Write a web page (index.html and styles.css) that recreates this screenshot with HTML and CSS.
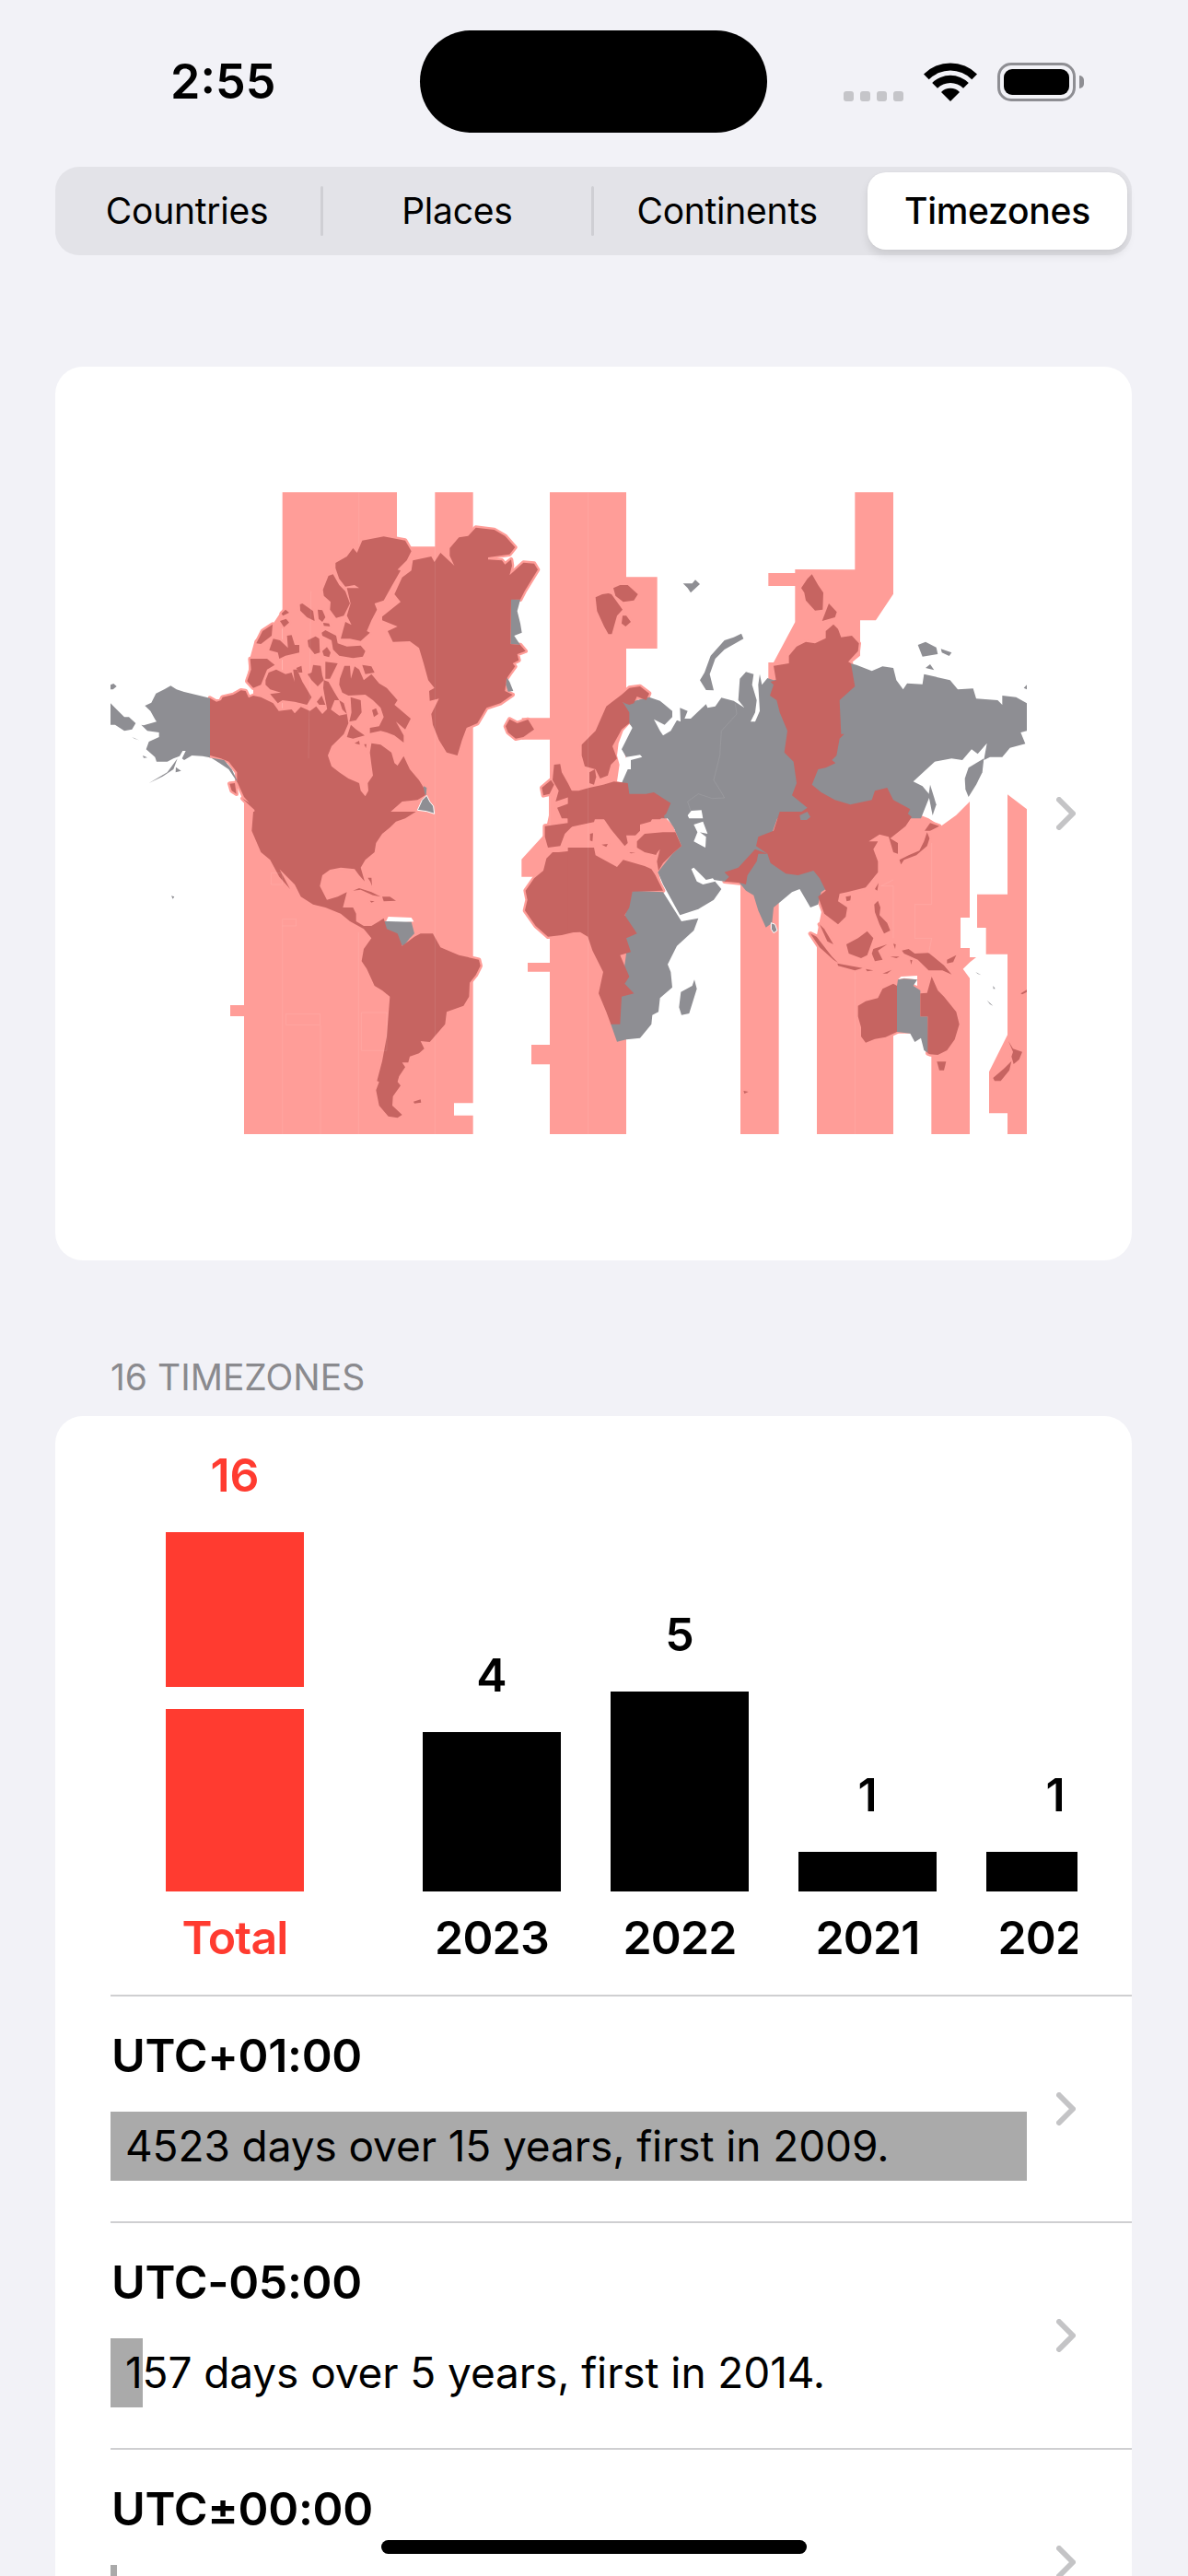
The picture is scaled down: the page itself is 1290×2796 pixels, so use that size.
FILE: index.html
```html
<!DOCTYPE html>
<html lang="en">
<head>
<meta charset="utf-8">
<title>Timezones</title>
<link rel="stylesheet" href="styles.css">
</head>
<body>
<div class="screen">
  <header class="status">
    <div class="time">2:55</div>
    <div class="island"></div>
    <div class="status-icons">
      <div class="signal"><i></i><i></i><i></i><i></i></div>
      <svg class="wifi" viewBox="0 0 58 42"><path d="M0 12.5A41 41 0 0 1 58 12.5L52.3 18.2A33 33 0 0 0 5.7 18.2Z"/><path d="M9.2 22A28 28 0 0 1 48.8 22L43 27.8A19.8 19.8 0 0 0 15 27.8Z"/><path d="M19 32A14 14 0 0 1 39 32L29 42Z"/></svg>
      <div class="battery"><div class="battery-fill"></div></div>
      <div class="battery-nub"></div>
    </div>
  </header>

  <nav class="segments">
    <div class="seg seg-sep">Countries</div>
    <div class="seg seg-sep">Places</div>
    <div class="seg">Continents</div>
    <div class="seg seg-on"><span class="seg-pill">Timezones</span></div>
  </nav>

  <section class="card map-card">
    <svg class="map" viewBox="0 0 2985 2118">
      <defs>
        <g id="red-land">
          <g>
            <path d="M324 683L345 695L360 690L365 680L400 672L425 658L440 660L450 682L465 675L490 680L530 700L548 725L590 720L600 733L620 712L650 725L670 710L690 735L710 715L745 740L770 735L775 765L760 800L720 840L708 870L720 905L745 925L775 945L810 960L815 985L830 1003L840 985L838 960L855 935L850 900L845 860L850 830L880 835L915 860L925 895L935 903L955 872L975 915L1005 950L1020 975L1025 1000L1000 1015L950 1020L905 1060L905 1075L465 1075L470 1045L435 1005L412 955L412 925L385 890L360 880L324 870Z"/>
            <path d="M388 962L405 960L410 995L395 985Z"/><path d="M430 1010L470 1035L478 1055L450 1030Z"/>
            <path d="M733 243L770 222L790 195L803 210L820 170L890 157L960 170L980 205L965 235L935 265L945 268L915 320L890 365L860 375L868 395L850 430L835 465L845 470L815 497L780 490L750 490L765 435L785 445L770 415L782 375L770 325L810 325L795 315L765 320L745 295L733 260Z"/>
            <path d="M692 330L710 285L725 280L745 315L765 335L780 375L760 415L735 422L715 395L717 370L695 350Z"/>
            <path d="M617 378L625 375L660 400L665 432L640 420L618 398Z"/><path d="M675 395L690 397L700 420L690 435L678 425Z"/><path d="M693 438L712 440L715 450L695 448Z"/>
            <path d="M688 470L700 462L735 480L740 505L770 515L815 512L830 530L822 548L790 553L745 545L725 525L720 495L690 480Z"/>
            <path d="M642 495L668 482L680 490L682 535L665 540L645 515Z"/><path d="M690 530L705 517L717 535L712 550L695 545Z"/>
            <path d="M660 575L685 578L690 610L695 625L675 645L655 625L642 605L655 600Z"/><path d="M700 565L740 570L715 620L700 620Z"/>
            <path d="M475 505L495 465L528 443L525 480L490 507Z"/><path d="M557 408L570 395L582 405L562 415Z"/><path d="M552 432L572 425L582 437L565 452Z"/>
            <path d="M517 527L530 490L552 495L578 520L575 480L590 478L600 510L615 510L615 535L570 545L550 555L545 535Z"/>
            <path d="M455 555L510 555L535 575L510 590L490 640L465 650L445 628L458 590Z"/>
            <path d="M505 625L515 600L540 590L570 605L590 600L600 630L595 590L608 590L625 630L655 680L640 705L600 695L560 690L545 700L520 670L555 665L520 655L505 640Z"/>
            <path d="M605 585L622 578L625 600L613 600Z"/>
            <path d="M747 620L762 578L780 578L783 620L795 580L810 590L825 625L850 605L875 635L900 650L935 690L925 705L978 750L960 785L930 760L955 805L955 828L925 805L900 795L880 790L845 797L845 780L875 775L890 745L880 715L855 690L830 672L775 675L755 665L745 640Z"/>
            <path d="M852 722L865 716L872 735L858 745Z"/><path d="M820 575L850 580L860 600L830 605Z"/>
            <path d="M783 770L800 785L828 805L790 815L770 810Z"/><path d="M782 680L815 690L818 730L800 755L778 760L785 730Z"/>
            <path d="M695 625L710 630L730 665L745 690L760 700L770 735L755 720L745 690L730 690L710 740L700 690L693 650Z"/><path d="M672 695L688 675L700 705L680 705Z"/><path d="M795 830L810 822L812 835Z"/><path d="M826 833L834 833L832 846Z"/>
            <path d="M885 418L945 370L925 345L950 290L980 268L985 235L1045 222L1055 240L1075 210L1120 252L1105 220L1105 195L1135 160L1165 155L1190 128L1250 135L1285 155L1318 192L1300 215L1230 225L1230 232L1275 235L1285 248L1305 232L1308 252L1300 283L1345 242L1380 245L1392 265L1350 333L1335 362L1305 362L1303 507L1335 510L1352 530L1325 540L1330 560L1310 570L1318 580L1300 605L1290 620L1285 660L1310 672L1270 700L1225 715L1195 765L1160 780L1145 820L1130 870L1095 860L1070 820L1050 770L1045 735L1070 685L1040 692L1038 660L1055 650L1035 625L1020 570L1005 520L975 498L920 500L903 465L935 450L885 430Z"/>
            <path d="M1287 775L1300 752L1325 765L1360 753L1380 785L1345 810L1320 815L1295 795Z"/>
            <path d="M1445 900L1465 898L1470 925L1490 960L1510 1000L1450 1020L1460 985L1440 950Z"/><path d="M1405 975L1435 950L1445 965L1430 995L1410 1000Z"/>
            <path d="M1455 1040L1510 1020L1510 1075L1470 1075Z"/>
          </g>
          <g transform="translate(0,1065)">
            <path d="M465 -12L995 -12L960 10L930 20L910 40L885 60L865 90L860 120L830 145L815 170L828 215L810 195L795 175L750 170L715 177L690 195L682 230L705 275L740 265L770 250L757 300L790 300L800 320L800 345L825 360L850 360L855 372L825 370L780 345L750 320L700 300L660 290L620 265L600 225L535 160L545 165L585 240L550 200L520 145L490 120L460 50Z"/>
            <path d="M790 245L810 237L850 250L880 265L855 260L815 242Z"/><path d="M885 265L910 265L930 278L890 280Z"/><path d="M845 278L860 280L850 284Z"/><path d="M838 203L850 203L852 230L846 215Z"/>
            <path d="M825 370L850 360L875 345L890 335L900 370L935 385L950 425L990 395L1010 385L1050 385L1075 430L1135 455L1200 470L1205 490L1190 520L1170 545L1168 590L1150 620L1095 640L1090 680L1040 738L1010 735L1022 760L1005 775L975 785L970 805L950 805L960 820L940 850L935 868L945 880L920 915L918 945L950 975L935 985L905 980L875 945L865 895L875 868L868 865L885 800L900 720L910 590L885 570L860 555L835 500L818 475L825 435L850 400Z"/>
            <path d="M987 932L1010 925L1012 935L990 938Z"/>
            <path d="M1415 35L1490 25L1510 30L1480 60L1465 100L1425 105L1415 70Z"/>
            <path d="M1510 115L1460 120L1440 120L1420 140L1410 180L1380 205L1352 245L1358 275L1350 310L1385 360L1425 395L1470 390L1510 380Z"/>
            <path d="M1490 0L1510 -12L1510 30L1490 25Z"/>
          </g>
          <g transform="translate(1500,0)">
            <path d="M80 355L102 345L122 342L132 345L168 395L150 415L133 475L122 475L108 450L85 400Z"/><path d="M138 325L160 315L185 315L218 345L205 365L170 370L145 350Z"/><path d="M168 415L180 415L195 435L178 450L165 440Z"/>
            <path d="M750 325L770 295L785 280L805 315L822 340L820 395L795 398L765 365L760 340Z"/><path d="M840 375L866 403L860 420L818 432Z"/>
            <path d="M35 835L80 790L115 710L165 672L190 650L225 645L255 668L245 690L215 678L205 700L190 705L175 700L168 695L190 730L190 765L165 785L135 840L150 880L130 900L120 935L95 945L80 915L45 905L35 870Z"/>
            <path d="M60 925L78 915L82 940L75 965L60 960Z"/>
            <path d="M660 578L710 570L710 545L735 515L765 500L795 505L830 488L830 465L855 443L870 458L880 485L915 480L938 505L935 530L903 565L912 570L925 645L875 690L880 800L890 800L875 815L865 870L850 885L862 895L830 910L805 915L785 965L815 990L860 1015L910 1030L980 1015L990 985L1030 975L1050 1015L1105 1045L1090 1075L680 1075L720 1075L770 1040L720 1000L735 960L725 890L695 860L705 790L680 730L670 690L648 675L660 640L650 630L668 625Z"/>
            <path d="M-10 985L25 985L60 975L105 965L140 955L185 960L190 995L245 995L270 990L325 1025L310 1060L290 1078L-10 1078Z"/>
          </g>
          <g transform="translate(1500,1065)">
            <path d="M-10 40L25 32L60 25L75 22L80 5L105 8L130 45L175 100L185 90L180 65L210 65L225 50L225 30L260 20L270 0L305 10L300 -15L-10 -15Z"/>
            <path d="M62 60L72 58L70 85L62 82Z"/><path d="M100 95L120 93L115 103Z"/><path d="M190 120L210 122L195 124Z"/><path d="M262 122L280 120L278 128Z"/>
            <path d="M215 85L240 60L300 55L340 55L360 100L330 125L300 155L285 180L280 150L290 110L275 128L240 120L215 105Z"/>
            <path d="M-10 105L75 105L80 130L150 168L170 145L240 165L262 175L275 195L300 245L200 248L190 300L175 325L215 385L180 400L195 445L160 455L190 525L175 548L205 580L165 590L160 680L130 680L115 640L90 580L105 510L70 440L55 395L30 380L-10 382Z"/>
            <path d="M680 -12L660 50L610 70L603 100L640 125L650 155L700 190L740 195L790 180L810 205L830 245L805 265L825 320L870 355L895 330L900 300L870 280L875 255L900 250L960 235L1000 185L1000 150L985 110L1000 85L970 85L1005 62L1035 70L1050 120L1065 125L1065 90L1040 75L1090 35L1110 5L1090 -12Z"/>
            <path d="M500 185L545 170L600 110L640 125L610 125L605 150L575 195L570 225L550 220L500 215L515 200Z"/>
            <path d="M895 265L912 262L910 277L898 280Z"/>
            <path d="M1070 145L1100 130L1135 115L1150 85L1160 55L1168 75L1160 100L1125 130L1085 145L1075 160Z"/><path d="M1152 50L1170 25L1200 35L1170 50Z"/>
            <path d="M990 240L1002 220L998 245Z"/>
            <path d="M988 290L1000 278L1008 300L1005 325L1030 350L1040 375L1020 385L1005 355L990 315Z"/>
            <path d="M780 385L800 395L850 460L870 480L855 470L810 430Z"/><path d="M810 355L825 370L855 420L835 410Z"/>
            <path d="M868 482L950 497L925 505L870 490Z"/><path d="M960 500L985 505L965 508Z"/>
            <path d="M897 420L935 400L965 377L985 400L965 455L945 465L905 450Z"/>
            <path d="M985 435L1030 420L1000 440L1015 470L990 475L980 450Z"/><path d="M1040 460L1070 460L1060 465Z"/><path d="M1015 515L1045 503L1030 515Z"/><path d="M1050 418L1058 420L1056 435Z"/>
            <path d="M1078 440L1100 435L1120 450L1165 448L1215 488L1240 518L1210 505L1165 505L1130 470L1085 450Z"/><path d="M1105 470L1112 472L1108 486Z"/><path d="M1225 470L1255 455L1245 478L1225 482Z"/>
            <path d="M935 620L960 605L1000 595L1015 565L1050 548L1062 555L1062 705L1025 722L990 728L960 740L945 720L945 690L935 655Z"/>
            <path d="M1138 580L1160 578L1175 525L1195 570L1215 590L1255 640L1265 680L1250 730L1225 765L1195 780L1170 778L1162 775L1162 655L1138 655Z"/>
            <path d="M1192 802L1222 802L1215 830L1200 830Z"/>
            <path d="M1425 735L1440 760L1470 770L1460 795L1442 810L1435 785L1440 770Z"/><path d="M1375 855L1410 825L1435 800L1428 830L1400 865L1380 865Z"/>
            <path d="M562 897L578 900L565 906Z"/><path d="M1465 580L1485 568L1485 575L1470 583Z"/>
          </g>
        </g>
      </defs>

      <g class="zone-fill">
        <path d="M560 13H933V190H1057V13H1181V2002H1119V2042H1181V2103H435V1000H560Z"/>
        <path d="M390 1683H435V1719H390Z"/>
        <path d="M560 395L530 440L470 495L455 550L445 630L465 650L465 680L560 760Z"/>
        <path d="M1431 13H1680V289H1781V522H1680V2103H1431V1876H1371V1812H1431V1574H1359V1545H1431V1265H1339V1208L1415 1125L1428 1065V1000H1431V818H1340V748H1431Z"/>
        <g transform="translate(1500,0)">
          <path d="M643 276H730V264L925 265V13H1050V344L993 430H942V545L905 575H700L660 630L643 620V567H660L730 436V318H643Z"/>
        </g>
        <g transform="translate(1500,1065)">
          <path d="M552 220H677V1038H552Z"/>
          <path d="M801 390V1038H1050V710H1174V1038H1299V530L1277 500L1300 478L1320 462H1299V432H1269V333H1299V-45L1254 0L1205 35L1165 10L1140 0H1050L830 240Z"/>
          <path d="M1422 -68L1485 -20V1038H1422V970H1362V835L1422 715V452H1352V366H1323V257H1422Z"/>
          <path d="M180 0H300L340 40L300 130L285 185L300 245H180Z"/>
        </g>
      </g>

      <use href="#red-land" class="land-halo"/>

      <g class="map-white">
        <g transform="translate(1500,0)">
          <path d="M190 768L202 778L170 850L180 880L190 912L168 958L150 955L158 900L150 870L155 830L170 790Z"/>
        </g>
        <g transform="translate(0,1065)">
          <path d="M895 350L905 330L980 333L988 346L930 350L905 362Z"/>
        </g>
        <g transform="translate(1500,1065)">
          <path d="M1065 535L1075 525L1128 522L1128 555L1115 550L1128 535L1085 530Z"/>
        </g>
      </g>

      <g class="land-gray">
        <path d="M324 683L290 675L240 663L215 655L196 643L175 655L148 668L133 698L112 708L130 725L145 752L150 760L108 772L100 770L120 790L158 795L158 810L125 825L116 850L145 875L150 890L185 890L205 880L225 872L235 855L245 855L233 880L240 885L265 870L300 872L340 880L370 885L395 915L412 950L415 960L385 915L355 895L324 875Z"/>
        <path d="M218 880L185 925L125 960L170 938L205 915Z"/>
        <path d="M0 700L20 720L45 745L60 745L82 765L70 785L45 790L15 770L0 770Z"/><path d="M0 640L10 636L20 645L8 655L0 655Z"/><path d="M70 810L92 820L78 815Z"/><path d="M105 870L120 877L108 878Z"/><path d="M213 908L230 920L212 925Z"/>
        <path d="M1020 970L1030 975L1028 1000L1018 995Z"/>
        <path class="gray-edge" d="M1000 1048L1015 1015L1030 1000L1040 1020L1052 1035L1055 1060L1030 1052Z"/>
        <path d="M1305 360L1335 362L1325 400L1335 440L1340 470L1315 480L1335 510L1303 507Z"/>
        <path d="M1290 615L1300 630L1312 660L1295 662L1288 640Z"/>
        <g transform="translate(0,1065)">
          <path d="M198 262L208 265L203 272Z"/>
          <path d="M890 345L905 345L980 347L985 365L990 385L975 400L955 425L935 415L930 385L895 370Z"/>
        </g>
        <g transform="translate(1500,0)">
          <path d="M420 625L435 600L455 545L500 495L530 485L555 473L562 490L500 525L470 555L452 605L465 658L440 657Z"/>
          <path d="M365 310L395 310L405 298L420 312L390 340L380 325Z"/>
          <path d="M168 695L190 700L215 690L255 680L290 692L330 725L330 745L305 770L270 752L290 790L300 805L325 790L345 755L357 760L355 715L380 725L370 750L390 750L440 703L445 715L470 710L490 682L530 692L565 715L545 690L550 620L570 598L595 605L590 640L605 690L600 730L585 760L600 760L615 725L610 640L615 605L622 640L640 618L660 625L690 620L910 570L930 575L980 595L1015 580L1050 585L1060 625L1082 655L1095 635L1145 638L1150 605L1235 625L1260 655L1310 652L1320 685L1390 690L1405 705L1405 675L1450 680L1485 700L1485 790L1465 795L1480 832L1430 845L1405 875L1365 875L1345 885L1355 830L1325 865L1305 850L1275 885L1240 880L1185 890L1115 955L1145 970L1170 1000L1140 1075L160 1075L165 960L185 915L195 915L195 885L232 875L225 868L180 875L165 850L200 780L190 765Z"/>
          <path d="M1283 945L1295 910L1320 895L1345 880L1340 925L1320 965L1295 1005L1285 980Z"/>
          <path d="M1130 510L1155 500L1190 518L1195 540L1145 548Z"/><path d="M1205 523L1240 535L1232 546L1208 535Z"/><path d="M1155 585L1170 573L1183 592Z"/><path d="M1475 650L1485 640L1485 655Z"/>
          <path d="M1170 965L1190 1030L1178 1065L1165 1000Z"/>
        </g>
        <g transform="translate(1500,1065)">
          <path d="M335 40L360 100L330 125L283 185L300 225L355 325L415 305L465 275L490 240L465 210L500 215L545 215L570 245L595 260L610 310L635 365L655 350L660 300L720 250L745 240L780 300L805 290L815 250L830 240L800 180L700 150L640 100L680 -12L300 -12Z"/>
          <path d="M200 245L300 250L360 345L415 335L400 375L345 425L315 485L325 510L330 560L290 595L285 640L265 650L262 680L225 725L180 730L150 737L130 680L160 600L180 450L175 330Z"/>
          <path d="M358 575L395 555L402 535L410 565L385 645L360 650L352 625Z"/>
          <path class="gray-edge" d="M652 350L665 355L672 375L660 383L652 370Z"/>
          <path d="M1062 555L1065 535L1085 532L1128 535L1115 555L1138 570L1138 655L1162 655L1165 775L1150 765L1140 725L1120 738L1105 710L1062 705Z"/>
          <path d="M1355 602L1375 620L1365 615Z"/><path d="M1375 555L1382 565L1376 565Z"/>
          <path d="M1318 510L1336 520L1325 516Z"/>
        </g>
      </g>

      <g class="map-white">
        <g transform="translate(1500,1065)">
          <path d="M400 85L438 105L440 70L420 55L445 60L430 20L400 30L412 55Z"/>
          <path d="M392 175L400 170L440 210L462 205L490 240L470 215L430 225L410 215Z"/>
        </g>
        <g transform="translate(1500,0)">
          <path d="M380 1065L392 1050L425 1048L430 1075L385 1075Z"/>
        </g>
      </g>

      <use href="#red-land" class="land-red"/>

      <g class="gray-top">
        <g transform="translate(1500,1065)"><path d="M745 0L770 -12L780 5L768 15L748 15Z"/></g>
      </g>

      <g class="zone-lines">
        <path d="M809 13V180M1057 190V2103M560 1425V2103M684 1747V2103M808 1445V2103M653 335L645 880M1431 1000V1100"/>
        <path d="M572 1711H683V1747H572ZM817 1707H900V1831H817ZM523 1253H560V1290H523ZM560 1403H605V1425H560Z"/>
        <g transform="translate(1500,0)">
          <path d="M56 13V1065"/>
          <path d="M535 700L540 735L490 790L485 870L465 950L490 990L500 1008L460 1010L415 995L380 1020L395 1065"/>
        </g>
        <g transform="translate(1500,1065)"><path d="M56 0V1038M925 510V1038M1050 210L1010 230H1050V400M1175 90V290H1120V400H1175L1165 450"/></g>
      </g>
    </svg>
    <svg class="chevron" viewBox="0 0 21 36"><path d="M3 3L18 18L3 33"/></svg>
  </section>

  <h2 class="section-title">16 TIMEZONES</h2>

  <section class="card list-card">
    <div class="chart">
      <div class="col col-total">
        <div class="col-value">16</div>
        <div class="bar bar-total" style="height:168px"></div>
        <div class="bar bar-total bar-gap" style="height:198px"></div>
        <div class="col-label">Total</div>
      </div>
      <div class="col">
        <div class="col-value">4</div>
        <div class="bar" style="height:173px"></div>
        <div class="col-label">2023</div>
      </div>
      <div class="col">
        <div class="col-value">5</div>
        <div class="bar" style="height:217px"></div>
        <div class="col-label">2022</div>
      </div>
      <div class="col">
        <div class="col-value">1</div>
        <div class="bar" style="height:43px"></div>
        <div class="col-label">2021</div>
      </div>
      <div class="col">
        <div class="col-value">1</div>
        <div class="bar" style="height:43px"></div>
        <div class="col-label">2020</div>
      </div>
    </div>

    <div class="row">
      <div class="row-body">
        <div class="row-title">UTC+01:00</div>
        <div class="meter"><div class="meter-fill" style="width:100%"></div><span class="meter-text">4523 days over 15 years, first in 2009.</span></div>
      </div>
      <svg class="chevron" viewBox="0 0 21 36"><path d="M3 3L18 18L3 33"/></svg>
    </div>
    <div class="row">
      <div class="row-body">
        <div class="row-title">UTC-05:00</div>
        <div class="meter"><div class="meter-fill" style="width:3.47%"></div><span class="meter-text">157 days over 5 years, first in 2014.</span></div>
      </div>
      <svg class="chevron" viewBox="0 0 21 36"><path d="M3 3L18 18L3 33"/></svg>
    </div>
    <div class="row">
      <div class="row-body">
        <div class="row-title">UTC±00:00</div>
        <div class="meter"><div class="meter-fill" style="width:0.7%"></div></div>
      </div>
      <svg class="chevron" viewBox="0 0 21 36"><path d="M3 3L18 18L3 33"/></svg>
    </div>
  </section>

  <div class="home-indicator"></div>
</div>
</body>
</html>
```

FILE: styles.css
```css
* { box-sizing: border-box; }
html, body { margin: 0; padding: 0; }
body { background: #f2f2f7; font-family: Inter, "Liberation Sans", sans-serif; color: #000; }
.screen { position: relative; width: 1290px; height: 2796px; overflow: hidden; background: #f2f2f7; }

/* status bar */
.status { display: grid; grid-template-columns: 456px 377px 1fr; align-items: center; padding-top: 33px; }
.time { padding-left: 185px; font-size: 52px; font-weight: 600; line-height: 60px; }
.island { height: 111px; border-radius: 56px; background: #000; }
.status-icons { display: flex; align-items: flex-end; height: 42px; padding-left: 83px; }
.signal { display: flex; gap: 7px; }
.signal i { display: block; width: 11px; height: 11px; border-radius: 3px; background: #c5c5c9; }
.wifi { width: 58px; height: 42px; margin-left: 22px; fill: #000; }
.battery { width: 85px; height: 42px; margin-left: 22px; padding: 4px; border: 3.5px solid #8e8e93; border-radius: 15px; }
.battery-fill { height: 100%; border-radius: 9px; background: #000; }
.battery-nub { width: 5px; height: 14px; margin: 0 0 14px 4px; border-radius: 0 5px 5px 0; background: #8e8e93; }

/* segmented control */
.segments { display: grid; grid-template-columns: repeat(4, 293.3px); height: 96px; width: 1169px; margin: 37px 0 0 60px; border-radius: 26px; background: #e3e3e8; }
.seg { position: relative; display: flex; align-items: center; justify-content: center; font-size: 39px; line-height: 48px; letter-spacing: -0.25px; margin: 0 3.6px 0 -3.6px; }
.seg-sep::after { content: ""; position: absolute; right: -1.5px; top: 21px; width: 3px; height: 54px; border-radius: 2px; background: #cfcfd4; }
.seg-on { padding: 6px 0; }
.seg-pill { flex: none; display: flex; align-items: center; justify-content: center; width: 282px; height: 84px; border-radius: 20px; background: #fff; font-weight: 500; box-shadow: 0 6px 10px rgba(0, 0, 0, .1), 0 0 2px rgba(0, 0, 0, .06); }

/* cards */
.card { margin-left: 60px; width: 1169px; background: #fff; }
.map-card { display: flex; align-items: center; height: 970px; margin-top: 121px; padding-left: 60px; border-radius: 30px; }
.map { display: block; width: 995px; height: 706px; flex: none; }
.map-card .chevron { margin-left: 32px; }
.chevron { display: block; flex: none; width: 21px; height: 36px; fill: none; stroke: #c4c4c6; stroke-width: 6; stroke-linecap: round; stroke-linejoin: round; }

/* map */
.zone-fill { fill: #ff9d98; }
.land-halo { fill: #ff9d98; stroke: #ff9d98; stroke-width: 14; stroke-linejoin: round; }
.land-red { fill: #c66461; }
.land-gray { fill: #8e8e93; }
.gray-edge { stroke: #fff; stroke-width: 3; }
.gray-top { fill: #8e8e93; }
.map-white { fill: #fff; }
.zone-lines { fill: none; stroke: rgba(255, 255, 255, .14); stroke-width: 2; }

.section-title { margin: 104px 0 19px 120px; font-size: 39px; line-height: 46px; font-weight: 400; color: #8a8a8e; }

/* chart */
.list-card { border-radius: 30px 30px 0 0; height: 1300px; }
.chart { display: flex; gap: 54px; width: 1050px; margin-left: 60px; padding: 34px 0 32px 60px; overflow: hidden; }
.col { display: flex; flex-direction: column; justify-content: flex-end; flex: none; width: 150px; text-align: center; }
.col-total { margin-right: 75px; color: #ff3b30; }
.col-value { font-size: 50px; line-height: 60px; font-weight: 600; margin-bottom: 32px; }
.bar { background: #000; }
.bar-total { background: #ff3b30; }
.bar-gap { margin-top: 24px; }
.col-label { margin: 20px -30px 0; font-size: 50px; line-height: 60px; font-weight: 600; letter-spacing: -0.8px; white-space: nowrap; }

/* rows */
.row { display: flex; align-items: center; margin-left: 60px; border-top: 2px solid #cfcfd1; height: 246px; }
.row-body { flex: none; width: 995px; padding-bottom: 11px; }
.row-title { font-size: 50px; line-height: 60px; font-weight: 600; letter-spacing: -0.3px; margin-bottom: 31px; padding-left: 1px; }
.row .chevron { margin-left: 32px; }
.meter { position: relative; height: 75px; display: flex; align-items: center; }
.meter-fill { position: absolute; left: 0; top: 0; bottom: 0; background: #aaa; }
.meter-text { position: relative; padding-left: 16px; font-size: 46px; line-height: 60px; letter-spacing: -0.1px; }

.home-indicator { position: absolute; left: 414px; top: 2757px; width: 462px; height: 15px; border-radius: 8px; background: #000; }
```
